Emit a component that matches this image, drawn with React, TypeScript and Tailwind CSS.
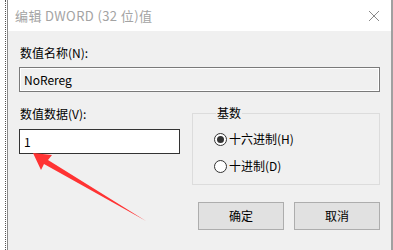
import React from "react";

const font = { fontFamily: '"Noto Sans CJK SC", "Liberation Sans", sans-serif' };

function Radio({ checked, label }: { checked?: boolean; label: string }) {
  return (
    <div className="flex items-center h-[16px]">
      <span className="w-[13px] h-[13px] rounded-full border border-[#333] bg-white flex items-center justify-center">
        {checked && <span className="w-[7px] h-[7px] rounded-full bg-[#333]" />}
      </span>
      <span className="ml-[2px] text-[12px] text-black leading-[16px]">{label}</span>
    </div>
  );
}

export default function App() {
  return (
    <div className="relative flex w-[393px] h-[250px] overflow-hidden bg-white" style={font}>
      {/* desktop edge */}
      <div className="w-[7px] h-full flex justify-end pr-[1px]">
        <div className="w-[1px] h-full border-l border-dotted border-[#555]" />
      </div>

      <div className="flex-1 flex flex-col border-l border-[#8a8a8a] border-r-2 border-r-[#a0a0a0]">
        {/* title bar */}
        <div className="h-[31px] bg-white flex items-center justify-between pl-[7px] pr-[8px] shrink-0">
          <span className="text-[13px] text-[#a3a3a3] tracking-[0.4px]">编辑 DWORD (32 位)值</span>
          <svg width="12" height="12" viewBox="0 0 12 12" className="mr-[3px]">
            <path d="M1 1L11 11M11 1L1 11" stroke="#8a8a8a" strokeWidth="1" />
          </svg>
        </div>

        {/* body */}
        <div className="flex-1 bg-[#f0f0f0] px-[11px] pt-[14px]">
          <div className="text-[12px] leading-[16px] text-black pl-[1px]">数值名称(N):</div>
          <div className="mt-[6px] h-[25px] border border-[#7a7a7a] bg-[#f0f0f0] flex items-center">
            <div className="h-full w-full border border-white flex items-center px-[3px] text-[12px] text-black">NoRereg</div>
          </div>

          <div className="flex mt-[14px]">
            <div className="w-[161px] flex flex-col">
              <div className="text-[12px] leading-[16px] text-black pl-[1px]">数值数据(V):</div>
              <div className="mt-[7px] h-[25px] border border-[#333] bg-white flex items-center px-[4px] text-[12px] text-black">1</div>
            </div>
            <fieldset className="ml-[12px] flex-1 border border-[#dcdcdc] h-[80px] -mt-[1px] pl-[21px] pt-[10px]">
              <legend className="ml-[2px] px-[1px] text-[12px] leading-[16px] text-black">基数</legend>
              <div className="flex flex-col gap-[11px]">
                <Radio checked label="十六进制(H)" />
                <Radio label="十进制(D)" />
              </div>
            </fieldset>
          </div>

          <div className="flex justify-end gap-[10px] mt-[17px]">
            <button className="w-[86px] h-[28px] bg-[#e1e1e1] border border-[#adadad] text-[12px] text-black">确定</button>
            <button className="w-[86px] h-[28px] bg-[#e1e1e1] border border-[#adadad] text-[12px] text-black">取消</button>
          </div>
        </div>
      </div>

      {/* red annotation arrow */}
      <svg className="absolute left-0 top-0 pointer-events-none" width="393" height="250" viewBox="0 0 393 250">
        <polygon points="33,153 52,155 48,160 146,221 44,164 41,170" fill="#ff3333" />
      </svg>
    </div>
  );
}
